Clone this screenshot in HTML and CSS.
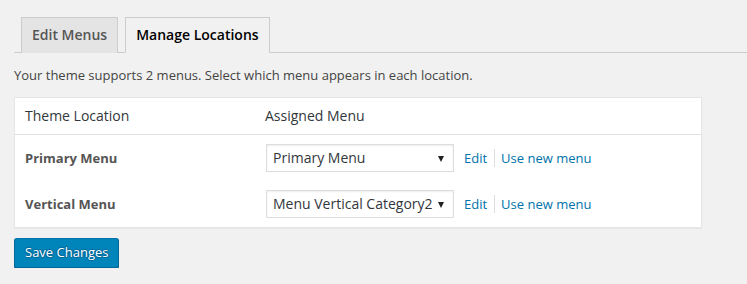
FILE: index.html
```html
<!DOCTYPE html>
<html lang="en">
<head>
    <meta charset="UTF-8">
    <meta name="viewport" content="width=device-width, initial-scale=1.0">
    <title>Menus - Manage Locations</title>
    <link rel="stylesheet" href="styles.css">
</head>
<body>

    <div class="wrap">
        <h2 class="nav-tab-wrapper">
            <a href="#" class="nav-tab">Edit Menus</a>
            <a href="#" class="nav-tab nav-tab-active">Manage Locations</a>
        </h2>

        <p class="intro">Your theme supports 2 menus. Select which menu appears in each location.</p>

        <form>
            <table class="menu-locations">
                <thead>
                    <tr>
                        <th class="col-location">Theme Location</th>
                        <th>Assigned Menu</th>
                    </tr>
                </thead>
                <tbody>
                    <tr>
                        <td class="location-name">Primary Menu</td>
                        <td>
                            <div class="menu-row">
                                <div class="select-wrap">
                                    <select>
                                        <option selected>Primary Menu</option>
                                        <option>Menu Vertical Category2</option>
                                    </select>
                                </div>
                                <span class="row-links">
                                    <a href="#">Edit</a>
                                    <span class="sep"></span>
                                    <a href="#">Use new menu</a>
                                </span>
                            </div>
                        </td>
                    </tr>
                    <tr>
                        <td class="location-name">Vertical Menu</td>
                        <td>
                            <div class="menu-row">
                                <div class="select-wrap">
                                    <select>
                                        <option>Primary Menu</option>
                                        <option selected>Menu Vertical Category2</option>
                                    </select>
                                </div>
                                <span class="row-links">
                                    <a href="#">Edit</a>
                                    <span class="sep"></span>
                                    <a href="#">Use new menu</a>
                                </span>
                            </div>
                        </td>
                    </tr>
                </tbody>
            </table>

            <button type="button" class="button-primary">Save Changes</button>
        </form>
    </div>

</body>
</html>
```

FILE: styles.css
```css
body {
    margin: 0;
    background: #f1f1f1;
    color: #444;
    font-family: 'Open Sans', 'Liberation Sans', sans-serif;
    font-size: 13px;
    line-height: 1.4;
}

.wrap {
    padding: 17px 0 0 14px;
}

/* tabs */
.nav-tab-wrapper {
    display: flex;
    margin: 0;
    padding: 0;
    border-bottom: 1px solid #ccc;
    font-size: 14px;
    font-weight: 600;
    line-height: 24px;
}

.nav-tab {
    display: block;
    margin-left: 7px;
    margin-bottom: -1px;
    padding: 5px 10px;
    border: 1px solid #ccc;
    border-bottom: none;
    background: #e4e4e4;
    color: #555;
    text-decoration: none;
}

.nav-tab-active {
    background: #f1f1f1;
    color: #000;
    border-bottom: 1px solid #f1f1f1;
}

.intro {
    margin: 12px 0 12px;
    line-height: 20px;
}

/* locations table */
.menu-locations {
    width: 688px;
    border-collapse: collapse;
    background: #fff;
    border: 1px solid #e5e5e5;
    box-shadow: 0 1px 1px rgba(0, 0, 0, 0.04);
}

.menu-locations th {
    padding: 8px 10px;
    height: 19px;
    border-bottom: 1px solid #e1e1e1;
    text-align: left;
    font-weight: 400;
    font-size: 14px;
    color: #32373c;
}

.col-location {
    width: 220px;
}

.menu-locations td {
    padding: 9px 10px;
    height: 28px;
    vertical-align: middle;
}

.location-name {
    font-weight: 700;
    color: #555;
}

.menu-row {
    display: flex;
    align-items: center;
    margin-left: 1px;
}

.select-wrap {
    position: relative;
}

.select-wrap::after {
    content: "";
    position: absolute;
    right: 10px;
    top: 12px;
    border-left: 3.5px solid transparent;
    border-right: 3.5px solid transparent;
    border-top: 6px solid #222;
    pointer-events: none;
}

select {
    -webkit-appearance: none;
    appearance: none;
    width: 188px;
    height: 28px;
    padding: 0 20px 0 6px;
    border: 1px solid #ddd;
    border-radius: 0;
    background: #fff;
    box-shadow: inset 0 1px 2px rgba(0, 0, 0, 0.07);
    color: #32373c;
    font-family: 'Open Sans', 'Liberation Sans', sans-serif;
    font-size: 14px;
}

.row-links {
    display: flex;
    align-items: center;
    margin-left: 10px;
}

.row-links a {
    color: #0073aa;
    text-decoration: none;
}

.sep {
    display: inline-block;
    width: 1px;
    height: 18px;
    margin: 0 6px 0 7px;
    background: #ddd;
}

.button-primary {
    display: block;
    margin-top: 10px;
    height: 30px;
    padding: 0 10px 1px;
    border: 1px solid #0073aa;
    border-color: #0073aa #006799 #006799;
    border-radius: 3px;
    background: #0085ba;
    box-shadow: 0 1px 0 #006799;
    color: #fff;
    text-shadow: 0 -1px 1px #006799, 1px 0 1px #006799, 0 1px 1px #006799, -1px 0 1px #006799;
    font-family: 'Open Sans', 'Liberation Sans', sans-serif;
    font-size: 13px;
    line-height: 26px;
    cursor: pointer;
}
```
